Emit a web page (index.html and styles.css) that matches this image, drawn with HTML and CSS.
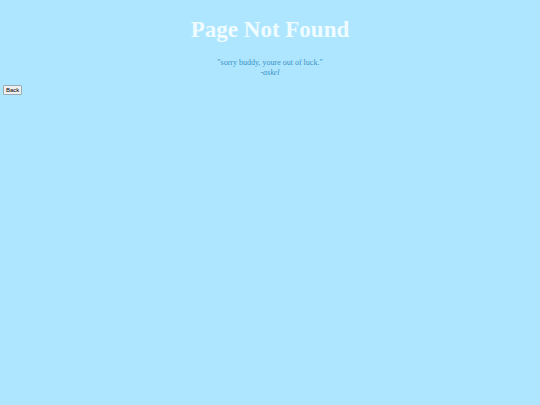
FILE: index.html
```html
<!DOCTYPE html>
<html lang="en">
<head>
<meta charset="utf-8">
<title>Page Not Found</title>
<link rel="stylesheet" href="styles.css">
</head>
<body>
<h1 class="title">Page Not Found</h1>
<p class="quote">"sorry buddy, youre out of luck."<br><em>-askel</em></p>
<button class="back" type="button">Back</button>
</body>
</html>
```
FILE: styles.css
```css
body {
  margin: 0;
  padding: 16px 3px;
  background: #aee6ff;
  font-family: "Liberation Serif", "Times New Roman", serif;
}

.title {
  margin: 0 0 14px;
  color: #f0fcff;
  font-size: 23px;
  line-height: 28px;
  text-align: center;
}

.quote {
  margin: 0 0 7px;
  color: #3a92c4;
  font-size: 8px;
  line-height: 10px;
  text-align: center;
}

.back {
  display: block;
  padding: 1px 2px;
  border: 1px solid #9aabb4;
  border-radius: 1px;
  background: #efefef;
  color: #000;
  font-family: "Liberation Sans", Arial, sans-serif;
  font-size: 6px;
  line-height: 6px;
}
```
